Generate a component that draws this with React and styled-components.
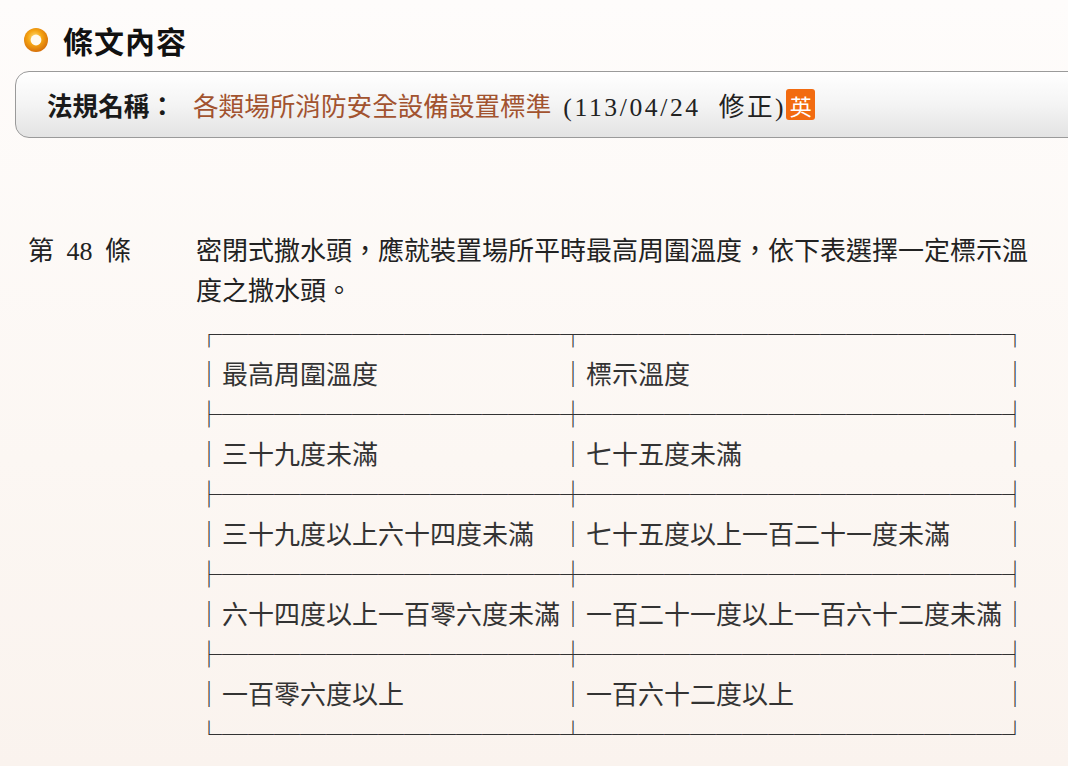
import styled, { createGlobalStyle } from "styled-components";

const GlobalStyle = createGlobalStyle`
    html, body {
        margin: 0;
        padding: 0;
        overflow: hidden;
    }
    body {
        background: linear-gradient(180deg, #fefcfb 0%, #fcf7f3 60%, #faf3ee 100%);
        min-height: 766px;
        font-family: "Liberation Serif", "Noto Sans CJK TC", serif;
        color: #222;
    }
`;

const CJK = `"Liberation Serif", "Noto Sans CJK TC", serif`;

// table rows, padded with full width spaces so the box chars line up
const LEFT_W = 13, RIGHT_W = 16;
const pad = (s, n) => s + "\u3000".repeat(n - s.length);
const rows = [
    ["最高周圍溫度", "標示溫度"],
    ["三十九度未滿", "七十五度未滿"],
    ["三十九度以上六十四度未滿", "七十五度以上一百二十一度未滿"],
    ["六十四度以上一百零六度未滿", "一百二十一度以上一百六十二度未滿"],
    ["一百零六度以上", "一百六十二度以上"],
];
const rule = (l, m, r) => l + "─".repeat(LEFT_W) + m + "─".repeat(RIGHT_W) + r;

const buildLines = () => {
    const lines = [rule("┌", "┬", "┐")];
    rows.forEach((row, i) => {
        lines.push("│" + pad(row[0], LEFT_W) + "│" + pad(row[1], RIGHT_W) + "│");
        lines.push(i === rows.length - 1 ? rule("└", "┴", "┘") : rule("├", "┼", "┤"));
    });
    return lines;
};

const OrangeRing = () => (
    <svg width="26" height="26" viewBox="0 0 26 26">
        <defs>
            <radialGradient id="ring" cx="45%" cy="40%" r="60%">
                <stop offset="0%" stopColor="#ffe27a" />
                <stop offset="50%" stopColor="#f5a412" />
                <stop offset="100%" stopColor="#d6700a" />
            </radialGradient>
        </defs>
        <circle cx="13" cy="13" r="12" fill="url(#ring)" />
        <circle cx="13" cy="13" r="5.4" fill="#fffaf0" />
    </svg>
);

const App = () => {
    return <Page>
        <GlobalStyle />
        <Heading>
            <OrangeRing />
            <h2>條文內容</h2>
        </Heading>
        <LawBar>
            <LawLabel>法規名稱：</LawLabel>
            <LawLink>各類場所消防安全設備設置標準</LawLink>
            <LawDate>(113/04/24&nbsp; 修正)</LawDate>
            <EnBadge>英</EnBadge>
        </LawBar>
        <Article>
            <ArticleNo>第 48 條</ArticleNo>
            <ArticleBody>
                <p>密閉式撒水頭，應就裝置場所平時最高周圍溫度，依下表選擇一定標示溫度之撒水頭。</p>
                <BoxTable>
                    {buildLines().map((line, i) => <div key={i}>{line}</div>)}
                </BoxTable>
            </ArticleBody>
        </Article>
    </Page>
}

export default App;

const Page = styled.div`
    display: flex;
    flex-direction: column;
    padding-top: 24px;
`;

const Heading = styled.div`
    display: flex;
    align-items: center;
    gap: 14px;
    padding-left: 23px;
    height: 32px;
    h2 {
        margin: 0;
        font-family: "Noto Sans CJK TC", sans-serif;
        font-size: 30px;
        font-weight: 700;
        color: #111;
        letter-spacing: 1px;
    }
`;

const LawBar = styled.div`
    display: flex;
    align-items: center;
    margin: 15px -40px 0 15px;
    height: 65px;
    padding-left: 31px;
    border: 1px solid #9a9a9a;
    border-radius: 14px;
    background: linear-gradient(180deg, #ffffff 0%, #f4f4f4 50%, #e3e3e3 100%);
    font-size: 25.6px;
`;

const LawLabel = styled.span`
    font-family: "Noto Sans CJK TC", sans-serif;
    font-weight: 700;
    color: #1a1a1a;
    margin-right: 18px;
`;

const LawLink = styled.span`
    font-family: ${CJK};
    color: #a2532f;
    margin-right: 12px;
`;

const LawDate = styled.span`
    font-family: ${CJK};
    color: #222;
    letter-spacing: 2.6px;
`;

const EnBadge = styled.span`
    display: inline-flex;
    align-items: center;
    justify-content: center;
    width: 29px;
    height: 31px;
    margin-left: 0;
    border-radius: 3px;
    background: #f26b10;
    color: #fff;
    font-family: "Noto Sans CJK TC", sans-serif;
    font-size: 22px;
`;

const Article = styled.div`
    display: flex;
    margin-top: 94px;
    padding: 0 32px 0 28px;
    font-family: ${CJK};
    font-size: 26px;
    line-height: 40px;
    color: #222;
`;

const ArticleNo = styled.div`
    width: 168px;
    flex-shrink: 0;
    word-spacing: 6px;
`;

const ArticleBody = styled.div`
    flex: 1;
    p {
        margin: 0 0 1px;
    }
`;

const BoxTable = styled.div`
    font-family: "Noto Sans CJK TC", sans-serif;
    white-space: pre;
    color: #333;
    div {
        height: 40px;
    }
`;
